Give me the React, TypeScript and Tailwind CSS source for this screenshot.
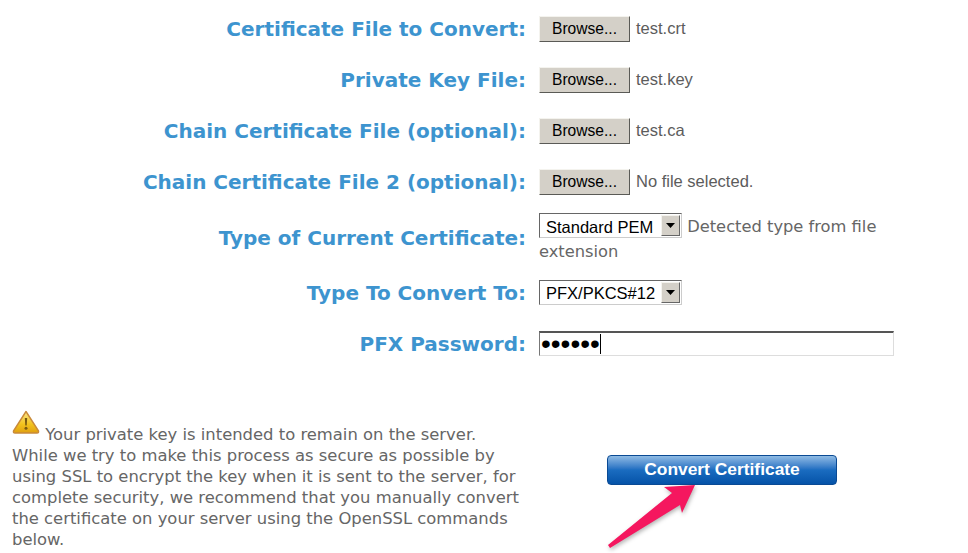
const verdana = 'font-["DejaVu_Sans",sans-serif]';

function Label({ children }: { children: string }) {
  return (
    <div className={`w-[526px] shrink-0 text-right text-[20px] font-bold leading-[26px] text-[#3d94cf] ${verdana}`}>
      {children}
    </div>
  );
}

function FileRow({ label, file }: { label: string; file: string }) {
  return (
    <div className="flex h-[51px] items-center">
      <Label>{label}</Label>
      <div className="ml-[13px] flex items-center">
        <button className="h-[26px] w-[91px] border border-t-[#f4f3ee] border-l-[#f4f3ee] border-r-[#5a5a56] border-b-[#5a5a56] bg-[#d4d0c8] font-['Liberation_Sans',sans-serif] text-[15.6px] leading-none text-black">
          Browse...
        </button>
        <span className="ml-[6px] font-['Liberation_Sans',sans-serif] text-[16.5px] text-[#5c5c5c]">{file}</span>
      </div>
    </div>
  );
}

function FakeSelect({ value }: { value: string }) {
  return (
    <div className="inline-flex h-[25px] w-[143px] items-center justify-between border border-t-[#666] border-l-[#666] border-r-[#ccc] border-b-[#ccc] bg-white">
      <span className="pl-[6px] pt-[2px] font-['Liberation_Sans',sans-serif] text-[16.5px] leading-none text-black">{value}</span>
      <span className="mr-px flex h-[21px] w-[19px] items-center justify-center border border-t-[#f4f3ee] border-l-[#f4f3ee] border-r-[#666] border-b-[#666] bg-[#d4d0c8]">
        <svg width="9" height="5" viewBox="0 0 9 5"><path d="M0 0h9L4.5 5z" fill="#000" /></svg>
      </span>
    </div>
  );
}

function WarningIcon() {
  return (
    <svg width="28" height="24" viewBox="0 0 28 24" className="inline-block align-[6px]">
      <defs>
        <linearGradient id="warn" x1="0" y1="0" x2="0" y2="1">
          <stop offset="0" stopColor="#fbe68a" />
          <stop offset="0.6" stopColor="#f2c21c" />
          <stop offset="1" stopColor="#e0a010" />
        </linearGradient>
      </defs>
      <path d="M14 1.5 L26.5 21 Q27 23 25 23 H3 Q1 23 1.5 21 Z" fill="url(#warn)" stroke="#c98a3a" strokeWidth="1.4" strokeLinejoin="round" />
      <path d="M12.8 8h2.4l-.5 7.5h-1.4z" fill="#7a5a10" />
      <circle cx="14" cy="18.3" r="1.5" fill="#7a5a10" />
    </svg>
  );
}

export default function App() {
  return (
    <div className="relative h-[553px] w-[968px] overflow-hidden bg-white">
      <div className="pt-[3px]">
        <FileRow label="Certificate File to Convert:" file="test.crt" />
        <FileRow label="Private Key File:" file="test.key" />
        <FileRow label="Chain Certificate File (optional):" file="test.ca" />
        <FileRow label="Chain Certificate File 2 (optional):" file="No file selected." />

        <div className="flex h-[61px] items-center">
          <Label>Type of Current Certificate:</Label>
          <div className={`ml-[13px] mt-[2px] w-[355px] text-[16.3px] leading-[24px] text-[#666] ${verdana}`}>
            <FakeSelect value="Standard PEM" /> Detected type from file extension
          </div>
        </div>

        <div className="flex h-[50px] items-center">
          <Label>Type To Convert To:</Label>
          <div className="ml-[13px] mb-[2px] flex">
            <FakeSelect value="PFX/PKCS#12" />
          </div>
        </div>

        <div className="flex h-[51px] items-center">
          <Label>PFX Password:</Label>
          <div className="ml-[13px] flex h-[25px] w-[355px] items-center border border-t-2 border-t-[#555] border-l-[#777] border-r-[#ddd] border-b-[#ddd] bg-white pl-px">
            <span className="font-['Liberation_Sans',sans-serif] text-[28px] leading-[20px] text-black">••••••</span>
            <span className="h-[20px] w-px bg-black" />
          </div>
        </div>
      </div>

      <div className="mt-[41px] flex">
        <p className={`ml-[12px] w-[512px] text-[16.4px] leading-[21px] text-[#666] ${verdana}`}>
          <WarningIcon /> Your private key is intended to remain on the server. While we try to make this process as secure as possible by using SSL to encrypt the key when it is sent to the server, for complete security, we recommend that you manually convert the certificate on your server using the OpenSSL commands below.
        </p>
        <div className="ml-[83px] pt-[45px]">
          <button className="h-[30px] w-[230px] rounded-[4px] border border-[#0a4a94] bg-gradient-to-b from-[#8fbbe4] via-[#1a6cc0] to-[#0553a8] font-['Liberation_Sans',sans-serif] text-[17.4px] font-bold leading-none text-white">
            Convert Certificate
          </button>
        </div>
      </div>

      {/* annotation arrow over the page */}
      <svg className="absolute left-[600px] top-[480px] drop-shadow-[1px_2px_2px_rgba(0,0,0,0.3)]" width="110" height="73" viewBox="0 0 110 73">
        <path d="M95 5 L64 7 L72 13 L8 65 L10 68 L80 25 L82 33 Z" fill="#f5175f" />
      </svg>
    </div>
  );
}
